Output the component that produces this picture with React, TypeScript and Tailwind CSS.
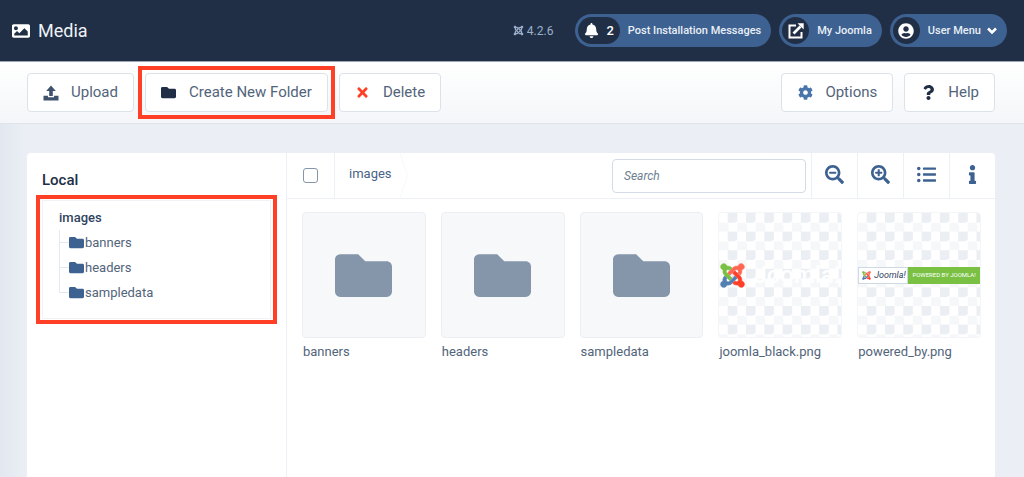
import React from "react";
import {
  FaBell,
  FaCog,
  FaFolder,
  FaImage,
  FaInfo,
  FaJoomla,
  FaListUl,
  FaQuestion,
  FaSearchMinus,
  FaSearchPlus,
  FaTimes,
  FaUserCircle,
} from "react-icons/fa";

const folders = ["banners", "headers", "sampledata"];

function UploadIcon() {
  return (
    <svg viewBox="0 0 16 16" className="size-4" fill="#3f536e" aria-hidden="true">
      <path d="M8 0.500L12.800 6H9.800V11H6.200V6H3.200Z" />
      <path d="M0.500 10.800H5V12.200H11V10.800H15.500V15.500H0.500Z" />
    </svg>
  );
}

function ExternalIcon() {
  return (
    <svg viewBox="0 0 16 16" className="size-4" fill="none" stroke="white" strokeWidth="2" aria-hidden="true">
      <path d="M8 2.500H1.500V14.500H13.500V9" />
      <path d="M5.500 10.500L12.500 3.500" strokeWidth="2.600" />
      <path d="M9.500 0.300H15.700V6.500Z" fill="white" stroke="none" />
    </svg>
  );
}

function ChevronIcon() {
  return (
    <svg viewBox="0 0 10 8" className="h-2 w-[10px]" fill="none" stroke="white" strokeWidth="2.600" aria-hidden="true">
      <path d="M1 1.500L5 5.500L9 1.500" />
    </svg>
  );
}

function JoomlaMark({ className = "" }: { className?: string }) {
  return (
    <svg viewBox="-12 20 472 472" className={className} strokeWidth="12" aria-hidden="true">
      <path
        fill="#ff6550"
        stroke="#ff6550"
        d="M130.1 208.5l44.3 44.3c10-10 89.7-89.7 99.7-99.8 14.3-14.3 37.6-14.3 51.9 0 12.8 12.8 17 35-3.5 55.4l44 44.3c31.2-31.2 38.5-67.6 28.9-101.2 29.2-4.1 51.9-29.2 51.9-59.5 0-33.2-26.8-60.1-59.8-60.1-30.3 0-55.4 22.5-59.5 51.6-33.8-9.9-71.7-1.5-98.3 25.1-18.3 19.1-71.1 71.5-99.6 99.9z"
      />
      <path
        fill="#7ac143"
        stroke="#7ac143"
        d="M.6 92.1C.6 58.8 27.4 32 60.4 32c30 0 54.5 21.9 59.2 50.2 32.6-7.6 67.1.6 96.5 30l-44.3 44.3c-20.5-20.5-42.6-16.3-55.4-3.5-14.3 14.3-14.3 37.9 0 52.2l99.5 99.5-44 44.3c-87.7-87.2-49.7-49.7-99.8-99.7-26.8-26.5-35-64.8-24.8-98.9C20.4 144.6.6 120.7.6 92.1z"
      />
      <path
        fill="#5480b1"
        stroke="#5480b1"
        d="M312.1 307.6l-44-44.3c-87 86.4-50.4 50.4-99.7 99.8-14.3 14.3-37.6 14.3-51.9 0-13.1-13.4-16.9-35.3 3.2-55.4l-44-44.3c-30.2 30.2-38 65.2-29.5 98.3-26.7 6-46.2 29.9-46.2 58.2C0 453.2 26.8 480 59.8 480c28.6 0 52.5-19.8 58.6-46.7 32.7 8.2 68.5-.6 94.2-26 32.1-32 12.2-12.4 99.5-99.7z"
      />
      <path
        fill="#ff4027"
        stroke="#ff4027"
        d="M396.4 360.7c8.2-32.7-.9-68.5-26.3-93.9-11.8-12.2 5 4.7-99.5-99.7l-44.3 44.3 99.7 99.7c14.3 14.3 14.3 37.6 0 51.9-12.8 12.8-35 17-55.4-3.5l-44 44.3c27.6 30.2 68 38.8 102.7 28 5.5 27.4 29.7 48.1 58.9 48.1 33 0 59.8-26.8 59.8-60.1 0-30.2-22.5-55-51.6-59.1z"
      />
    </svg>
  );
}

type ToolbarButtonProps = {
  icon: React.ReactNode;
  label: string;
  highlighted?: boolean;
};

function ToolbarButton({ icon, label, highlighted = false }: ToolbarButtonProps) {
  return (
    <div className={highlighted ? "relative z-10" : ""}>
      <button className="flex h-[39px] items-center gap-3 rounded border border-[#dbe2ea] bg-white px-[15px] text-[15px] whitespace-nowrap text-[#52647a]">
        <span className="flex w-4 justify-center text-[15px]">{icon}</span>
        {label}
      </button>
      {highlighted && (
        <span className="pointer-events-none absolute -inset-x-[7px] -inset-y-[7px] border-4 border-[#ff4027]" />
      )}
    </div>
  );
}

function HeaderPill({ badge, children }: { badge: React.ReactNode; children: React.ReactNode }) {
  return (
    <button className="flex h-[33px] items-center gap-2 rounded-full bg-[#3d6190] pr-[10px] pl-[3px] text-[11px] font-medium whitespace-nowrap text-[#e9eff7]">
      <span className="flex h-[27px] min-w-[27px] items-center justify-center rounded-full bg-[#202f46] text-white">
        {badge}
      </span>
      <span className="flex items-center gap-[6px] leading-4">{children}</span>
    </button>
  );
}

function MediaItem({ name, image = false, children }: { name: string; image?: boolean; children: React.ReactNode }) {
  return (
    <li className="min-w-0">
      <div
        className={`flex h-[126px] items-center overflow-hidden rounded border ${
          image
            ? "border-[#f3f5f8] bg-[conic-gradient(#ebeff4_25%,transparent_0_50%,#f6f7f9_0_75%,transparent_0)] bg-[length:15%_15%]"
            : "justify-center border-[#ebeff4] bg-[#f6f8fa]"
        }`}
      >
        {children}
      </div>
      <p className="truncate px-px pt-1 text-[13px] leading-5 text-[#52647a]">{name}</p>
    </li>
  );
}

function IconButton({ label, children }: { label: string; children: React.ReactNode }) {
  return (
    <button
      aria-label={label}
      className="flex w-[46px] items-center justify-center border-l border-[#edf0f4] pb-[3px] text-[19px] text-[#3d6190]"
    >
      {children}
    </button>
  );
}

export default function App() {
  return (
    <div className="flex min-h-screen flex-col bg-[#ebeff5] font-[Roboto,sans-serif] text-[#52647a]">
      <header className="flex h-[61px] items-center gap-2 bg-[#202f46] pr-[17px] pl-3">
        <FaImage className="text-lg text-white" />
        <h1 className="grow text-lg text-[#eef2f7]">Media</h1>
        <span className="mr-[14px] flex items-center gap-[3px] text-xs text-[#9cb0cc]">
          <FaJoomla className="text-[11px]" />
          4.2.6
        </span>
        <HeaderPill
          badge={
            <span className="flex items-center gap-[7px] px-[6px] text-[13px]">
              <FaBell className="text-[15px]" />2
            </span>
          }
        >
          Post Installation Messages
        </HeaderPill>
        <HeaderPill badge={<ExternalIcon />}>My Joomla</HeaderPill>
        <HeaderPill badge={<FaUserCircle className="text-base" />}>
          User Menu
          <ChevronIcon />
        </HeaderPill>
      </header>

      <div className="flex h-[63px] items-center gap-[11px] border-t border-b border-t-[#9ca6b5] border-b-[#dfe4eb] bg-linear-to-b from-white to-[#f4f6f9] pr-[29px] pl-[27px]">
        <ToolbarButton icon={<UploadIcon />} label="Upload" />
        <ToolbarButton icon={<FaFolder className="text-[#202f46]" />} label="Create New Folder" highlighted />
        <ToolbarButton icon={<FaTimes className="text-[#ff4027]" />} label="Delete" />
        <div className="ml-auto flex gap-[11px]">
          <ToolbarButton icon={<FaCog className="text-[#4a75ab]" />} label="Options" />
          <ToolbarButton icon={<FaQuestion className="text-[#202f46]" />} label="Help" />
        </div>
      </div>

      <div className="flex grow bg-linear-to-r from-[#e2e8f0] to-[#ebeff5] to-[26px] pt-[29px] pr-[29px] pl-[27px]">
        <main className="flex grow rounded-t bg-white">
          <aside className="w-[260px] shrink-0 border-r border-[#edf0f4] pt-[17px] pl-[15px]">
            <h2 className="text-[15px] leading-5 font-medium text-[#202f46]">Local</h2>
            <div className="relative mt-[10px] mr-[15px] border border-[#f0f2f5] pt-2 pb-[13px] pl-4">
              <a href="#images" className="block text-[13px] leading-[17px] font-medium text-[#30435f]">
                images
              </a>
              <ul className="pt-1">
                {folders.map((folder, idx) => (
                  <li key={folder} className="flex h-[25px] items-center">
                    <span
                      className={`w-[10px] border-l border-[#e3e9f0] ${
                        idx === folders.length - 1 ? "h-[13px] self-start border-b" : "flex h-full items-center"
                      }`}
                    >
                      {idx < folders.length - 1 && <span className="h-px w-full bg-[#e3e9f0]" />}
                    </span>
                    <a href={`#${folder}`} className="flex items-center gap-px text-[13px]">
                      <FaFolder className="text-[15px] text-[#3d6190]" />
                      {folder}
                    </a>
                  </li>
                ))}
              </ul>
              <span className="pointer-events-none absolute -inset-x-[7px] -inset-y-[6px] border-4 border-[#ff4027]" />
            </div>
          </aside>

          <section className="min-w-0 grow">
            <div className="flex h-[46px] border-b border-[#edf0f4]">
              <label className="flex w-12 items-center justify-center border-r border-[#edf0f4]">
                <input
                  type="checkbox"
                  aria-label="Select all"
                  className="size-[15px] appearance-none rounded-[3px] border border-[#8595aa] bg-white"
                />
              </label>
              <nav className="flex items-center pl-[14px]">
                <a href="#images" className="pb-1 text-[13px] text-[#4a6488]">
                  images
                </a>
                <svg viewBox="0 0 8 45" className="ml-2 h-full w-2" fill="none" stroke="#f7f8fa">
                  <path d="M0 0L7.500 22.500L0 45" />
                </svg>
              </nav>
              <div className="ml-auto flex items-center pr-[5px]">
                <input
                  type="search"
                  aria-label="Search"
                  placeholder="Search"
                  className="h-[34px] w-[194px] rounded border border-[#d3dce6] px-[11px] text-xs placeholder:text-[#6d7f93] placeholder:italic"
                />
              </div>
              <IconButton label="Zoom out">
                <FaSearchMinus />
              </IconButton>
              <IconButton label="Zoom in">
                <FaSearchPlus />
              </IconButton>
              <IconButton label="List view">
                <FaListUl />
              </IconButton>
              <IconButton label="Details">
                <FaInfo />
              </IconButton>
            </div>

            <ul className="grid grid-cols-5 gap-[15px] pt-[13px] pr-[14px] pl-[15px]">
              {folders.map((folder) => (
                <MediaItem key={folder} name={folder}>
                  <FaFolder className="text-[57px] text-[#8595aa]" />
                </MediaItem>
              ))}
              <MediaItem name="joomla_black.png" image>
                <JoomlaMark className="ml-px size-[25px] shrink-0" />
                <span className="pl-2 text-2xl leading-none font-medium text-white">Joomla!</span>
              </MediaItem>
              <MediaItem name="powered_by.png" image>
                <div className="flex h-[17px] w-full text-white">
                  <span className="flex w-[50px] shrink-0 items-center gap-[3px] border border-[#cfd9e4] bg-white pl-[3px] text-[9px] leading-none text-[#30435f] italic">
                    <JoomlaMark className="size-[9px] shrink-0" />
                    Joomla!
                  </span>
                  <span className="flex grow items-center justify-center bg-[#7ac143] text-[6px] leading-none whitespace-nowrap">
                    POWERED BY JOOMLA!
                  </span>
                </div>
              </MediaItem>
            </ul>
          </section>
        </main>
      </div>
    </div>
  );
}
